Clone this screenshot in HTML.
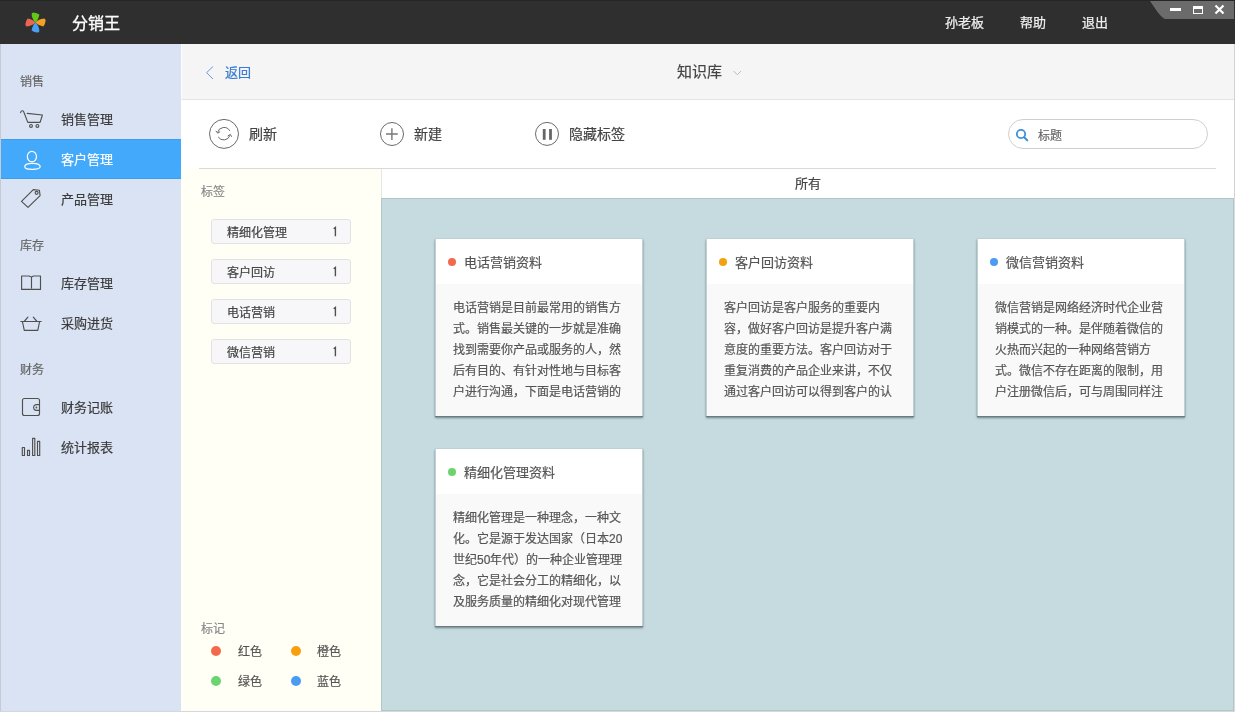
<!DOCTYPE html>
<html lang="zh-CN"><head><meta charset="utf-8">
<style>
*{margin:0;padding:0;box-sizing:border-box}
html,body{width:1235px;height:712px;overflow:hidden;background:#fff}body{will-change:transform;-webkit-text-stroke-width:0.2px}
body{font-family:"Liberation Sans",sans-serif;position:relative;color:#444}
.a{position:absolute;white-space:nowrap}
#top{left:0;top:0;width:1235px;height:44px;background:#2f2f2f;border-top:1px solid #262626}
#side{left:0;top:44px;width:181px;height:668px;background:#dae3f3;border-left:1px solid #c4cbd6}
.lbl{font-size:12px;color:#666;line-height:14px}
.it{font-size:13px;color:#3b3b3b;line-height:16px}
#act{left:1px;top:139px;width:181px;height:40px;background:#43a9fa;border-top:1px solid #3f9de8;border-bottom:1px solid #3f9de8}
#hdr{left:181px;top:44px;width:1053px;height:56px;background:#f5f5f5;border-bottom:1px solid #e3e3e3;border-left:1px solid #fcfcfc}
#tool{left:181px;top:100px;width:1054px;height:69px;background:#fff}
#tline{left:199px;top:168px;width:1017px;height:1px;background:#d9d9d9}
#tags{left:181px;top:169px;width:200px;height:543px;background:#fffff6}
#allh{left:381px;top:169px;width:853px;height:29px;background:#fff;border-left:1px solid #e6e6e6}
#cont{left:381px;top:198px;width:853px;height:513px;background:#c6dbe0;border:1px solid #b4c5ca}
#bot{left:0;top:711px;width:1235px;height:1px;background:#d3d8dd}
#rb{left:1234px;top:44px;width:1px;height:154px;background:#d2d2d2}#rb2{left:1234px;top:198px;width:1px;height:514px;background:#d8dcdc}
.tag{left:211px;width:140px;height:25px;background:#f7f7f9;border:1px solid #e2e2e2;border-radius:3px}
.tag span{position:absolute;top:6px;font-size:12px;line-height:14px;color:#444}
.dot{width:10px;height:10px;border-radius:5px}
.card{width:208px;height:178px;background:#f9f9f9;box-shadow:0 1px 0 #6a7a7d,0 2px 2px rgba(70,90,95,0.7);border:1px solid #c0cfd3;border-bottom:0}
.card .h{position:absolute;left:0;top:0;width:100%;height:45px;background:#fff}
.card .d{position:absolute;left:12px;top:19px;width:8px;height:8px;border-radius:4px}
.card .t{position:absolute;left:28px;top:16px;font-size:13px;line-height:16px;color:#555}
.card .b{position:absolute;left:17px;top:59px;width:172px;font-size:12px;line-height:21px;color:#555;white-space:normal}
</style></head><body>
<div id="top" class="a"></div>
<div id="side" class="a"></div>
<div id="act" class="a"></div>
<div id="hdr" class="a"></div>
<div id="tool" class="a"></div>
<div id="tline" class="a"></div>
<div id="tags" class="a"></div>
<div id="allh" class="a"></div>
<div id="cont" class="a"></div>

<!-- top bar content -->
<div class="a" style="left:72px;top:15px;font-size:16px;line-height:18px;color:#fff;-webkit-text-stroke:0.35px #fff">分销王</div>
<div class="a" style="left:945px;top:15px;font-size:13px;line-height:16px;color:#eee;-webkit-text-stroke:0.25px #eee">孙老板</div>
<div class="a" style="left:1020px;top:15px;font-size:13px;line-height:16px;color:#eee;-webkit-text-stroke:0.25px #eee">帮助</div>
<div class="a" style="left:1082px;top:15px;font-size:13px;line-height:16px;color:#eee;-webkit-text-stroke:0.25px #eee">退出</div>

<!-- sidebar -->
<div class="a lbl" style="left:20px;top:75px">销售</div>
<div class="a it" style="left:61px;top:112px">销售管理</div>
<div class="a it" style="left:61px;top:152px;color:#fff">客户管理</div>
<div class="a it" style="left:61px;top:192px">产品管理</div>
<div class="a lbl" style="left:20px;top:239px">库存</div>
<div class="a it" style="left:61px;top:276px">库存管理</div>
<div class="a it" style="left:61px;top:316px">采购进货</div>
<div class="a lbl" style="left:20px;top:363px">财务</div>
<div class="a it" style="left:61px;top:400px">财务记账</div>
<div class="a it" style="left:61px;top:440px">统计报表</div>

<!-- header -->
<div class="a" style="left:225px;top:65px;font-size:13px;line-height:16px;color:#3a7bd5">返回</div>
<div class="a" style="left:677px;top:63px;font-size:15px;line-height:18px;color:#444">知识库</div>

<!-- toolbar -->
<div class="a" style="left:249px;top:126px;font-size:14px;line-height:16px;color:#444">刷新</div>
<div class="a" style="left:414px;top:126px;font-size:14px;line-height:16px;color:#444">新建</div>
<div class="a" style="left:569px;top:126px;font-size:14px;line-height:16px;color:#444">隐藏标签</div>
<div class="a" style="left:1008px;top:119px;width:200px;height:30px;border:1px solid #cfcfcf;border-radius:15px;background:#fff"></div>
<div class="a" style="left:1038px;top:129px;font-size:12px;line-height:14px;color:#666">标题</div>

<div class="a" style="left:795px;top:176px;font-size:13px;line-height:16px;color:#444">所有</div>

<!-- tags -->
<div class="a lbl" style="left:201px;top:185px;color:#888">标签</div>
<div class="a tag" style="top:219px"><span style="left:15px">精细化管理</span></div>
<div class="a tag" style="top:259px"><span style="left:15px">客户回访</span></div>
<div class="a tag" style="top:299px"><span style="left:15px">电话营销</span></div>
<div class="a tag" style="top:339px"><span style="left:15px">微信营销</span></div>

<div class="a lbl" style="left:201px;top:622px;color:#888">标记</div>
<div class="a dot" style="left:211px;top:646px;background:#f26a4b"></div>
<div class="a lbl" style="left:238px;top:645px;color:#555">红色</div>
<div class="a dot" style="left:291px;top:646px;background:#f5a00c"></div>
<div class="a lbl" style="left:317px;top:645px;color:#555">橙色</div>
<div class="a dot" style="left:211px;top:676px;background:#6cd46e"></div>
<div class="a lbl" style="left:238px;top:675px;color:#555">绿色</div>
<div class="a dot" style="left:291px;top:676px;background:#4b9bf2"></div>
<div class="a lbl" style="left:317px;top:675px;color:#555">蓝色</div>

<!-- cards -->
<div class="a card" style="left:435px;top:238px"><div class="h"></div><div class="d" style="background:#f26a4b"></div><div class="t">电话营销资料</div><div class="b">电话营销是目前最常用的销售方式。销售最关键的一步就是准确找到需要你产品或服务的人，然后有目的、有针对性地与目标客户进行沟通，下面是电话营销的</div></div>
<div class="a card" style="left:706px;top:238px"><div class="h"></div><div class="d" style="background:#f0a30f"></div><div class="t">客户回访资料</div><div class="b">客户回访是客户服务的重要内容，做好客户回访是提升客户满意度的重要方法。客户回访对于重复消费的产品企业来讲，不仅通过客户回访可以得到客户的认</div></div>
<div class="a card" style="left:977px;top:238px"><div class="h"></div><div class="d" style="background:#4b9bf2"></div><div class="t">微信营销资料</div><div class="b">微信营销是网络经济时代企业营销模式的一种。是伴随着微信的火热而兴起的一种网络营销方式。微信不存在距离的限制，用户注册微信后，可与周围同样注</div></div>
<div class="a card" style="left:435px;top:448px"><div class="h"></div><div class="d" style="background:#6cd46e"></div><div class="t">精细化管理资料</div><div class="b">精细化管理是一种理念，一种文化。它是源于发达国家（日本20世纪50年代）的一种企业管理理念，它是社会分工的精细化，以及服务质量的精细化对现代管理</div></div>

<svg class="a" style="left:0;top:0" width="1235" height="712" viewBox="0 0 1235 712">
<!-- logo -->
<g transform="translate(35.5,22.5)">
<path id="pt" d="M0,0 C-2,-1.6 -3.7,-5 -3.9,-8.6 Q-3.7,-10.2 -1.8,-10.1 Q1.5,-9.7 3.9,-7.9 C3.3,-4.6 1.9,-1.6 0,0 Z" fill="#5fc818"/>
<path d="M0,0 C-2,-1.6 -3.7,-5 -3.9,-8.6 Q-3.7,-10.2 -1.8,-10.1 Q1.5,-9.7 3.9,-7.9 C3.3,-4.6 1.9,-1.6 0,0 Z" fill="#f2a122" transform="rotate(90)"/>
<path d="M0,0 C-2,-1.6 -3.7,-5 -3.9,-8.6 Q-3.7,-10.2 -1.8,-10.1 Q1.5,-9.7 3.9,-7.9 C3.3,-4.6 1.9,-1.6 0,0 Z" fill="#4b9ff2" transform="rotate(180)"/>
<path d="M0,0 C-2,-1.6 -3.7,-5 -3.9,-8.6 Q-3.7,-10.2 -1.8,-10.1 Q1.5,-9.7 3.9,-7.9 C3.3,-4.6 1.9,-1.6 0,0 Z" fill="#ea6552" transform="rotate(270)"/>
</g>
<!-- window controls -->
<path d="M1150,1 L1234,1 L1234,19 L1165,19 C1160,17 1155,8 1150,1 Z" fill="#6b6b6b"/>
<rect x="1170" y="8" width="11" height="3" fill="#fff"/>
<rect x="1193" y="6" width="10" height="8" fill="#fff"/>
<rect x="1194" y="9" width="8" height="4" fill="#6b6b6b"/>
<path d="M1215.5,5.5 L1223.5,13.5 M1223.5,5.5 L1215.5,13.5" stroke="#fff" stroke-width="2.2"/>
<!-- sidebar icons -->
<g fill="none" stroke="#505050" stroke-width="1.15" stroke-linejoin="round" stroke-linecap="round">
<path d="M20.6,112.6 Q21,110.6 22.6,110.8 Q23.4,111 23.8,112 L27.8,122.4 H40.1 L42.4,115 L27.2,113.4"/>
<circle cx="31" cy="125.9" r="1.4"/>
<circle cx="37.4" cy="125.9" r="1.4"/>
<path d="M21.5,201.3 L33.3,189.6 L39.4,190.2 L40.1,195.6 L28,207.4 Z"/>
<circle cx="36.6" cy="192.8" r="1.5"/>
<path d="M21.6,289.4 V276 H29 L31.5,277 V288 M31.5,277 L33.5,276 H40.5 V289.4 H21.6"/>
<path d="M20.8,321.5 H41.2 M22.4,321.5 L24.3,330.3 H37.8 L39.6,321.5 M24.6,321 L27.9,317.2 M33.3,317.2 L36.6,321"/>
<rect x="22.5" y="398.5" width="17" height="17" rx="2"/>
<path d="M39.5,404.6 H35.8 A3,3 0 0 0 35.8,410.4 H39.5"/>
<path d="M22.3,447.5 h2.2 v8 h-2.2 Z M27.5,450.4 h2 v5.1 h-2 Z M32.6,438.4 h2.2 v17.1 h-2.2 Z M37.5,441.4 h2.2 v14.1 h-2.2 Z"/>
</g>
<circle cx="36.4" cy="407.5" r="0.9" fill="#555"/>
<g fill="none" stroke="#fff" stroke-width="1.2">
<ellipse cx="31.9" cy="156.6" rx="4.6" ry="5.3"/>
<path d="M24.7,166.8 C24.7,164.2 28.5,163.3 32.4,163.3 C36.3,163.3 40.2,164.2 40.2,166.8 C40.2,168.9 37,169.3 32.4,169.3 C27.8,169.3 24.7,168.9 24.7,166.8 Z"/>
</g>
<!-- back chevron -->
<path d="M213,66.5 L206.6,72.7 L213,79" fill="none" stroke="#5a8edb" stroke-width="0.9"/>
<path d="M733.5,71 L737.3,74.8 L741.1,71" fill="none" stroke="#bbb" stroke-width="1"/>
<!-- toolbar icons -->
<g fill="none" stroke="#6a6a6a" stroke-width="1">
<circle cx="224" cy="133.9" r="14.5"/>
<path d="M229.8,130.9 A6.6,6.6 0 0 0 217.6,132.4"/>
<path d="M215.8,130.8 L217.7,133.2 L220.2,131.6"/>
<path d="M218.2,137 A6.6,6.6 0 0 0 230,135.3"/>
<path d="M227.6,136.1 L230.4,134.4 L231.6,136.8"/>
<circle cx="392" cy="134" r="11.5"/>
<circle cx="547" cy="133.9" r="11.5"/>
</g>
<path d="M386,134 H397.8 M391.9,128.2 V140" stroke="#777" stroke-width="1.4"/>
<rect x="542.8" y="129" width="2.8" height="10.8" fill="#666"/>
<rect x="549.1" y="129" width="2.8" height="10.8" fill="#666"/>
<!-- tag counts -->
<path d="M333.7,228.8 L335.4,227.4 V236.2" fill="none" stroke="#505050" stroke-width="1.4"/><path d="M333.7,268.8 L335.4,267.4 V276.2" fill="none" stroke="#505050" stroke-width="1.4"/><path d="M333.7,308.8 L335.4,307.4 V316.2" fill="none" stroke="#505050" stroke-width="1.4"/><path d="M333.7,348.8 L335.4,347.4 V356.2" fill="none" stroke="#505050" stroke-width="1.4"/>
<!-- search -->
<circle cx="1021" cy="134" r="4.2" fill="none" stroke="#3d8fdb" stroke-width="1.8"/>
<path d="M1024.2,137.2 L1027.3,140.4" stroke="#3d8fdb" stroke-width="2" stroke-linecap="round"/>
</svg>
<div id="bot" class="a"></div>
<div id="rb" class="a"></div><div id="rb2" class="a"></div>
</body></html>
